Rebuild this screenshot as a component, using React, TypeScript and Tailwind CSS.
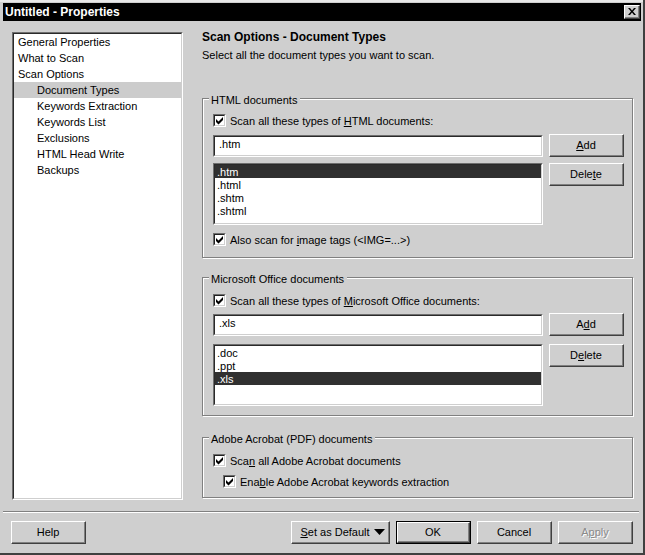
import type { ReactNode } from 'react';

const navItems = [
  { label: 'General Properties', sub: false },
  { label: 'What to Scan', sub: false },
  { label: 'Scan Options', sub: false },
  { label: 'Document Types', sub: true, active: true },
  { label: 'Keywords Extraction', sub: true },
  { label: 'Keywords List', sub: true },
  { label: 'Exclusions', sub: true },
  { label: 'HTML Head Write', sub: true },
  { label: 'Backups', sub: true },
];

function Button({ className, children, strong, disabled }: { className: string; children: ReactNode; strong?: boolean; disabled?: boolean }) {
  return (
    <div className={`absolute ${className} ${strong ? 'outline outline-1 outline-black' : ''}`}>
      <div className="h-full w-full border border-t-white border-l-white border-r-[#404040] border-b-[#404040] bg-[#cfcfcf]">
        <div className={`flex h-full w-full items-center justify-center border-r border-b border-r-[#808080] border-b-[#808080] ${disabled ? 'text-[#8a8a8a]' : 'text-black'}`}>
          {children}
        </div>
      </div>
    </div>
  );
}

function Check({ className, children }: { className: string; children: ReactNode }) {
  return (
    <div className={`absolute flex items-center gap-[4px] whitespace-nowrap ${className}`}>
      <div className="h-[13px] w-[13px] border border-t-[#6e6e6e] border-l-[#6e6e6e] border-r-white border-b-white bg-white">
        <div className="h-full w-full border border-t-[#222222] border-l-[#222222] border-r-[#cfcfcf] border-b-[#cfcfcf]">
          <svg viewBox="0 0 9 9" className="h-[9px] w-[9px]">
            <path d="M1 3 L3.5 5.5 L8 1 V4 L3.5 8.5 L1 6 Z" fill="#000" />
          </svg>
        </div>
      </div>
      <span className="relative top-[1px]">{children}</span>
    </div>
  );
}

function Sunken({ className, children }: { className: string; children: ReactNode }) {
  return (
    <div className={`absolute border border-t-[#6e6e6e] border-l-[#6e6e6e] border-r-white border-b-white ${className}`}>
      <div className="h-full w-full overflow-hidden border border-t-[#2a2a2a] border-l-[#2a2a2a] border-r-[#cfcfcf] border-b-[#cfcfcf] bg-white">
        {children}
      </div>
    </div>
  );
}

function Group({ className, title }: { className: string; title: string }) {
  return (
    <div className={`absolute border border-[#808080] shadow-[1px_1px_0_#fff,inset_1px_1px_0_#fff] ${className}`}>
      <span className="absolute left-[6px] top-[-5px] bg-[#cfcfcf] pl-[2px] pr-[3px] whitespace-nowrap">{title}</span>
    </div>
  );
}

function ListBox({ className, items, selected }: { className: string; items: string[]; selected: string }) {
  return (
    <Sunken className={className}>
      {items.map((item) => (
        <div key={item} className={`h-[13px] pl-[2px] pt-[1px] leading-[12px] ${item === selected ? 'bg-[#303030] text-white' : 'text-black'}`}>
          {item}
        </div>
      ))}
    </Sunken>
  );
}

export default function App() {
  return (
    <div className="relative h-[555px] w-[645px] overflow-hidden bg-[#cfcfcf] [font-family:Liberation_Sans,sans-serif] text-[11px] leading-[13px] text-black">
      {/* Window frame */}
      <div className="absolute inset-0 border-r-2 border-b-2 border-r-[#404040] border-b-[#404040]" />
      <div className="absolute left-0 top-0 h-[2px] w-[643px] bg-[#e8e8e8]" />

      {/* Title bar */}
      <div className="absolute left-[3px] top-[3px] flex h-[18px] w-[638px] items-center bg-black pl-[2px] text-[12px] font-bold text-white">
        Untitled - Properties
      </div>
      <Button className="left-[624px] top-[5px] h-[14px] w-[16px]">
        <svg viewBox="0 0 8 7" className="h-[7px] w-[8px]">
          <path d="M0 0 H2 L4 2.5 L6 0 H8 L5 3.5 L8 7 H6 L4 4.5 L2 7 H0 L3 3.5 Z" fill="#000" />
        </svg>
      </Button>

      {/* Nav list */}
      <Sunken className="left-[12px] top-[32px] h-[468px] w-[171px]">
        <div>
          {navItems.map((item) => (
            <div key={item.label} className={`h-[16px] leading-[16px] ${item.sub ? 'pl-[23px]' : 'pl-[4px]'} ${item.active ? 'bg-[#cccccc]' : ''}`}>
              {item.label}
            </div>
          ))}
        </div>
      </Sunken>

      {/* Heading */}
      <div className="absolute left-[202px] top-[31px] text-[12px] font-bold">Scan Options - Document Types</div>
      <div className="absolute left-[202px] top-[49px]">Select all the document types you want to scan.</div>

      {/* HTML documents */}
      <Group className="left-[202px] top-[98px] h-[160px] w-[431px]" title="HTML documents" />
      <Check className="left-[213px] top-[114px]">
        Scan all these types of <u>H</u>TML documents:
      </Check>
      <Sunken className="left-[213px] top-[135px] h-[22px] w-[330px]">
        <div className="pl-[4px] pt-[1px]">.htm</div>
      </Sunken>
      <ListBox className="left-[213px] top-[163px] h-[62px] w-[330px]" items={['.htm', '.html', '.shtm', '.shtml']} selected=".htm" />
      <Button className="left-[549px] top-[134px] h-[23px] w-[75px]"><span><u>A</u>dd</span></Button>
      <Button className="left-[549px] top-[163px] h-[23px] w-[75px]"><span>Dele<u>t</u>e</span></Button>
      <Check className="left-[213px] top-[233px]">
        Also scan for <u>i</u>mage tags (&lt;IMG=...&gt;)
      </Check>

      {/* Microsoft Office documents */}
      <Group className="left-[202px] top-[277px] h-[139px] w-[431px]" title="Microsoft Office documents" />
      <Check className="left-[213px] top-[294px]">
        Scan all these types of <u>M</u>icrosoft Office documents:
      </Check>
      <Sunken className="left-[213px] top-[314px] h-[22px] w-[330px]">
        <div className="pl-[4px] pt-[1px]">.xls</div>
      </Sunken>
      <ListBox className="left-[213px] top-[344px] h-[62px] w-[330px]" items={['.doc', '.ppt', '.xls']} selected=".xls" />
      <Button className="left-[549px] top-[313px] h-[23px] w-[75px]"><span>A<u>d</u>d</span></Button>
      <Button className="left-[549px] top-[344px] h-[23px] w-[75px]"><span>D<u>e</u>lete</span></Button>

      {/* Adobe Acrobat */}
      <Group className="left-[202px] top-[437px] h-[61px] w-[431px]" title="Adobe Acrobat (PDF) documents" />
      <Check className="left-[213px] top-[454px]">
        Sca<u>n</u> all Adobe Acrobat documents
      </Check>
      <Check className="left-[223px] top-[475px]">
        Ena<u>b</u>le Adobe Acrobat keywords extraction
      </Check>

      {/* Footer */}
      <div className="absolute left-[3px] top-[511px] h-[1px] w-[636px] bg-[#808080]" />
      <div className="absolute left-[3px] top-[512px] h-[1px] w-[636px] bg-white" />
      <Button className="left-[11px] top-[521px] h-[23px] w-[75px]">Help</Button>
      <Button className="left-[291px] top-[521px] h-[23px] w-[99px]">
        <span className="flex items-center gap-[4px] pl-[5px]">
          <span><u>S</u>et as Default</span>
          <svg viewBox="0 0 11 6" className="h-[6px] w-[11px]"><path d="M0 0 H11 L5.5 6 Z" fill="#000" /></svg>
        </span>
      </Button>
      <Button className="left-[397px] top-[522px] h-[21px] w-[73px]" strong>OK</Button>
      <Button className="left-[477px] top-[521px] h-[23px] w-[75px]">Cancel</Button>
      <Button className="left-[558px] top-[521px] h-[23px] w-[75px]" disabled>
        <span className="[text-shadow:1px_1px_0_#fff]">A<u>p</u>ply</span>
      </Button>
    </div>
  );
}
